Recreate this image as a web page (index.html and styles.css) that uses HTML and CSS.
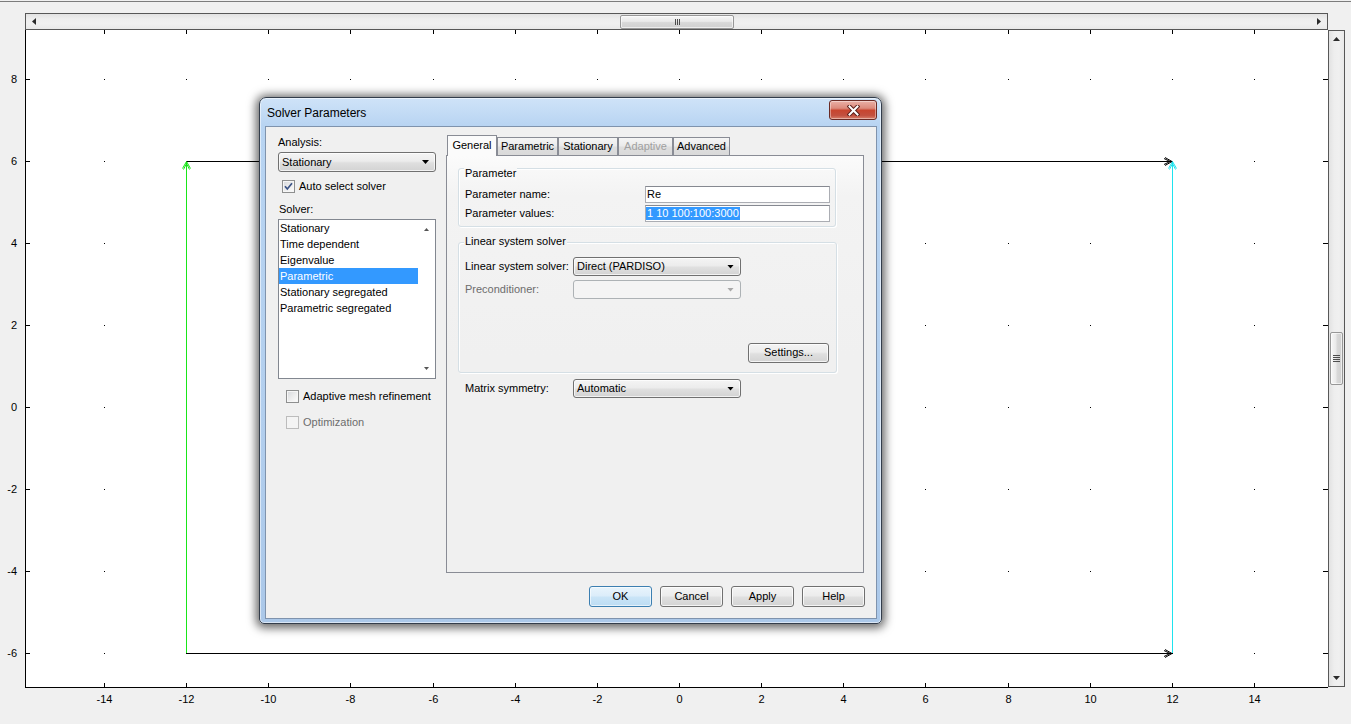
FILE: index.html
```html
<!DOCTYPE html>
<html lang="en">
<head>
<meta charset="utf-8">
<title>Solver Parameters</title>
<link rel="stylesheet" href="styles.css">
</head>
<body>
<div class="screen">
  <div class="hbar-row">
    <div class="hscroll">
      <div class="sb-btn"><i class="tri tri-left"></i></div>
      <div class="htrack"><div class="hthumb"><span class="grip-v"><i></i><i></i><i></i></span></div></div>
      <div class="sb-btn"><i class="tri tri-right"></i></div>
    </div>
  </div>
  <div class="main-row">
    <svg class="plot" width="1328" height="694" viewBox="0 0 1328 694" xmlns="http://www.w3.org/2000/svg">
      <defs>
        <g id="dotrow" fill="#000">
          <rect x="104" y="0" width="1" height="1"/><rect x="186" y="0" width="1" height="1"/><rect x="268" y="0" width="1" height="1"/>
          <rect x="350" y="0" width="1" height="1"/><rect x="433" y="0" width="1" height="1"/><rect x="515" y="0" width="1" height="1"/>
          <rect x="597" y="0" width="1" height="1"/><rect x="679" y="0" width="1" height="1"/><rect x="761" y="0" width="1" height="1"/>
          <rect x="843" y="0" width="1" height="1"/><rect x="925" y="0" width="1" height="1"/><rect x="1008" y="0" width="1" height="1"/>
          <rect x="1090" y="0" width="1" height="1"/><rect x="1172" y="0" width="1" height="1"/><rect x="1254" y="0" width="1" height="1"/>
        </g>
      </defs>
      <rect x="25" y="0" width="1303" height="657" fill="#fff"/>
      <use href="#dotrow" y="49"/><use href="#dotrow" y="131"/><use href="#dotrow" y="213"/><use href="#dotrow" y="295"/>
      <use href="#dotrow" y="377"/><use href="#dotrow" y="459"/><use href="#dotrow" y="541"/><use href="#dotrow" y="623"/>
      <path class="ticks" d="M104.5 0v4M186.5 0v4M268.5 0v4M350.5 0v4M433.5 0v4M515.5 0v4M597.5 0v4M679.5 0v4M761.5 0v4M843.5 0v4M925.5 0v4M1008.5 0v4M1090.5 0v4M1172.5 0v4M1254.5 0v4
        M104.5 653v4M186.5 653v4M268.5 653v4M350.5 653v4M433.5 653v4M515.5 653v4M597.5 653v4M679.5 653v4M761.5 653v4M843.5 653v4M925.5 653v4M1008.5 653v4M1090.5 653v4M1172.5 653v4M1254.5 653v4
        M26 49.5h4M26 131.5h4M26 213.5h4M26 295.5h4M26 377.5h4M26 459.5h4M26 541.5h4M26 623.5h4
        M1323 49.5h5M1323 131.5h5M1323 213.5h5M1323 295.5h5M1323 377.5h5M1323 459.5h5M1323 541.5h5M1323 623.5h5"/>
      <path class="axis" d="M25.5 0V658M25 657.5H1328"/>
      <path class="edge-green" d="M186.5 623V132"/>
      <path class="edge-cyan" d="M1172.5 623V132"/>
      <path class="edge-black" d="M186 131.5H1172M186 623.5H1172"/>
      <path class="head-green" d="M182.5 138.5L186.5 131.5L190.5 138.5M183.5 139.5L186.5 133.5L189.5 139.5"/>
      <path class="head-cyan" d="M1168.5 138.5L1172.5 131.5L1176.5 138.5M1169.5 139.5L1172.5 133.5L1175.5 139.5"/>
      <path class="head-black" d="M1165 127.5L1172 131.5L1165 135.5M1164 128.5L1170 131.5L1164 134.5M1165 619.5L1172 623.5L1165 627.5M1164 620.5L1170 623.5L1164 626.5"/>
      <g class="ylab">
        <text x="17" y="53">8</text><text x="17" y="135">6</text><text x="17" y="217">4</text><text x="17" y="299">2</text>
        <text x="17" y="381">0</text><text x="17" y="463">-2</text><text x="17" y="545">-4</text><text x="17" y="627">-6</text>
      </g>
      <g class="xlab">
        <text x="104.5" y="673">-14</text><text x="186.5" y="673">-12</text><text x="268.5" y="673">-10</text><text x="350.5" y="673">-8</text>
        <text x="433.5" y="673">-6</text><text x="515.5" y="673">-4</text><text x="597.5" y="673">-2</text><text x="679.5" y="673">0</text>
        <text x="761.5" y="673">2</text><text x="843.5" y="673">4</text><text x="925.5" y="673">6</text><text x="1008.5" y="673">8</text>
        <text x="1090.5" y="673">10</text><text x="1172.5" y="673">12</text><text x="1254.5" y="673">14</text>
      </g>
    </svg>
    <div class="vscroll">
      <div class="sb-btn v"><i class="tri tri-up"></i></div>
      <div class="vtrack"><div class="vthumb"><span class="grip-h"><i></i><i></i><i></i><i></i></span></div></div>
      <div class="sb-btn v"><i class="tri tri-down"></i></div>
    </div>
  </div>
</div>

<div class="dialog">
  <div class="titlebar">
    <span class="title">Solver Parameters</span>
    <div class="close-btn">
      <svg width="13" height="11" viewBox="0 0 13 11" xmlns="http://www.w3.org/2000/svg">
        <path d="M2.5 1.5L10.5 9.5M10.5 1.5L2.5 9.5" stroke="#5a1f1a" stroke-width="4" stroke-linecap="square" fill="none"/>
        <path d="M2.5 1.5L10.5 9.5M10.5 1.5L2.5 9.5" stroke="#fff" stroke-width="2" stroke-linecap="square" fill="none"/>
      </svg>
    </div>
  </div>
  <div class="client">
    <div class="body">
      <div class="leftpane">
        <div class="lbl lbl-analysis">Analysis:</div>
        <div class="combo combo-analysis"><span class="ct">Stationary</span><i class="dd"></i></div>
        <div class="chk-row row-auto">
          <span class="chk"><svg width="11" height="11" viewBox="0 0 11 11" xmlns="http://www.w3.org/2000/svg"><path d="M2 5.2L4.3 8L9 2.2" stroke="#3b5386" stroke-width="1.7" fill="none"/></svg></span>
          <span>Auto select solver</span>
        </div>
        <div class="lbl lbl-solver">Solver:</div>
        <div class="listbox">
          <ul class="items">
            <li>Stationary</li>
            <li>Time dependent</li>
            <li>Eigenvalue</li>
            <li class="sel">Parametric</li>
            <li>Stationary segregated</li>
            <li>Parametric segregated</li>
          </ul>
          <div class="lb-scroll"><i class="tri tri-up sm"></i><i class="tri tri-down sm"></i></div>
        </div>
        <div class="chk-row row-adapt"><span class="chk"></span><span>Adaptive mesh refinement</span></div>
        <div class="chk-row row-opt disabled"><span class="chk"></span><span>Optimization</span></div>
      </div>
      <div class="tabctl">
        <div class="tabs">
          <div class="tab active t-general">General</div>
          <div class="tab t-param">Parametric</div>
          <div class="tab t-stat">Stationary</div>
          <div class="tab t-adapt disabled">Adaptive</div>
          <div class="tab t-adv">Advanced</div>
        </div>
        <div class="pane">
          <div class="group g-param">
            <div class="gtitle">Parameter</div>
            <div class="frow r1"><span class="flabel">Parameter name:</span><div class="edit"><span class="etext">Re</span></div></div>
            <div class="frow r2"><span class="flabel">Parameter values:</span><div class="edit"><span class="etext selected">1 10 100:100:3000</span></div></div>
          </div>
          <div class="group g-linear">
            <div class="gtitle">Linear system solver</div>
            <div class="frow c1"><span class="flabel w108">Linear system solver:</span><div class="combo combo-mid"><span class="ct">Direct (PARDISO)</span><i class="dd"></i></div></div>
            <div class="frow c2 disabled"><span class="flabel w108">Preconditioner:</span><div class="combo combo-mid disabled"><span class="ct"></span><i class="dd"></i></div></div>
            <div class="frow settings-row"><button class="btn btn-settings">Settings...</button></div>
          </div>
          <div class="frow matrix-row"><span class="flabel w108">Matrix symmetry:</span><div class="combo combo-mid"><span class="ct">Automatic</span><i class="dd"></i></div></div>
        </div>
      </div>
    </div>
    <div class="buttons">
      <button class="btn default">OK</button>
      <button class="btn">Cancel</button>
      <button class="btn">Apply</button>
      <button class="btn">Help</button>
    </div>
  </div>
</div>
</body>
</html>
```

FILE: styles.css
```css
* { box-sizing: border-box; }

html, body {
  margin: 0;
  padding: 0;
}

body {
  width: 1351px;
  height: 724px;
  overflow: hidden;
  background: #f0f0f0;
  font-family: "Liberation Sans", Arial, sans-serif;
  position: relative;
}

.screen {
  margin-top: 1px;
  border-top: 1px solid #7c7c7c;
}

/* ---------- horizontal scrollbar ---------- */
.hbar-row {
  height: 28px;
  padding: 11px 0 0 25px;
}

.hscroll {
  width: 1303px;
  height: 17px;
  border: 1px solid #575757;
  display: flex;
  background: linear-gradient(#e2e2e2, #eeeeee 35%, #f0f0f0 65%, #e9e9e9);
}

.sb-btn {
  width: 16px;
  flex: none;
  display: flex;
  align-items: center;
  justify-content: center;
}

.sb-btn.v {
  width: auto;
  height: 16px;
}

.htrack {
  flex: 1;
  display: flex;
  align-items: center;
}

.hthumb {
  margin-left: 578px;
  width: 114px;
  height: 14px;
  border: 1px solid #979797;
  border-radius: 2px;
  background: linear-gradient(#f7f7f7, #e9e9e9 45%, #d8d8d8 55%, #d0d0d0);
  box-shadow: inset 0 0 0 1px rgba(255,255,255,.6);
  display: flex;
  align-items: center;
  justify-content: center;
}

.grip-v {
  display: flex;
  gap: 1px;
}

.grip-v i {
  display: block;
  width: 1px;
  height: 6px;
  background: #4d4d4d;
}

/* ---------- triangles ---------- */
.tri {
  display: block;
  background: #2b2b2b;
}

.tri-left  { width: 4px; height: 7px; clip-path: polygon(100% 0, 100% 100%, 0 50%); }
.tri-right { width: 4px; height: 7px; clip-path: polygon(0 0, 0 100%, 100% 50%); }
.tri-up    { width: 7px; height: 4px; clip-path: polygon(0 100%, 100% 100%, 50% 0); }
.tri-down  { width: 7px; height: 4px; clip-path: polygon(0 0, 100% 0, 50% 100%); }

.tri.sm {
  width: 5px;
  height: 3px;
  background: #555555;
}

/* ---------- plot ---------- */
.main-row {
  display: flex;
  height: 694px;
}

.plot {
  display: block;
  flex: none;
}

.plot .ticks,
.plot .axis {
  stroke: #000;
  stroke-width: 1;
  fill: none;
}

.plot .edge-green,
.plot .head-green {
  stroke: #19e619;
  fill: none;
}

.plot .edge-cyan,
.plot .head-cyan {
  stroke: #1ee3ee;
  fill: none;
}

.plot .edge-black,
.plot .head-black {
  stroke: #000;
  fill: none;
}

.plot text {
  font-family: "Liberation Sans", Arial, sans-serif;
  font-size: 11px;
  fill: #000;
}

.plot .ylab text { text-anchor: end; }
.plot .xlab text { text-anchor: middle; }

/* ---------- vertical scrollbar ---------- */
.vscroll {
  width: 17px;
  height: 657px;
  flex: none;
  border: 1px solid #575757;
  display: flex;
  flex-direction: column;
  background: linear-gradient(to right, #e2e2e2, #eeeeee 35%, #f0f0f0 65%, #e9e9e9);
}

.vtrack {
  flex: 1;
  display: flex;
  flex-direction: column;
  align-items: center;
}

.vthumb {
  margin-top: 285px;
  width: 13px;
  height: 53px;
  border: 1px solid #979797;
  border-radius: 2px;
  background: linear-gradient(to right, #f7f7f7, #e9e9e9 45%, #d8d8d8 55%, #d0d0d0);
  box-shadow: inset 0 0 0 1px rgba(255,255,255,.6);
  display: flex;
  align-items: center;
  justify-content: center;
}

.grip-h {
  display: flex;
  flex-direction: column;
  gap: 1px;
}

.grip-h i {
  display: block;
  width: 7px;
  height: 1px;
  background: #4d4d4d;
}

/* ---------- dialog ---------- */
.dialog {
  position: absolute;
  left: 259px;
  top: 97px;
  width: 623px;
  height: 527px;
  border: 1px solid #333d4b;
  border-radius: 7px 7px 5px 5px;
  background: linear-gradient(180deg, #cfe3f8 0px, #b8d4f2 28px, #b3cfee 60%, #abc8e9 100%);
  box-shadow: 0 1px 10px 3px rgba(0,0,0,.6), inset 0 0 0 1px rgba(255,255,255,.55);
  display: flex;
  flex-direction: column;
  font-family: "Liberation Sans", Arial, sans-serif;
  font-size: 11px;
  color: #000;
}

.titlebar {
  height: 28px;
  flex: none;
  display: flex;
  align-items: flex-start;
  padding-left: 7px;
}

.title {
  margin-top: 8px;
  font-size: 12px;
  line-height: 14px;
  color: #000;
}

.close-btn {
  margin-left: auto;
  margin-right: 4px;
  margin-top: 2px;
  width: 48px;
  height: 20px;
  border: 1px solid #6a2a24;
  border-radius: 3px;
  background: linear-gradient(#eab0a6 0%, #dc8a7c 40%, #c8452f 52%, #c2503f 80%, #d9806c 100%);
  box-shadow: inset 0 0 0 1px rgba(255,255,255,.4);
  display: flex;
  align-items: center;
  justify-content: center;
}

.client {
  flex: 1;
  margin: 0 4px 4px 5px;
  border: 1px solid #7f93ad;
  background: #f0f0f0;
  padding: 8px 12px 11px 12px;
  display: flex;
  flex-direction: column;
}

.body {
  display: flex;
  gap: 10px;
  height: 438px;
  flex: none;
}

/* left pane */
.leftpane {
  width: 158px;
  flex: none;
  display: flex;
  flex-direction: column;
}

.lbl {
  height: 13px;
  line-height: 13px;
  white-space: nowrap;
}

.lbl-analysis { margin-top: 1px; }
.lbl-solver { margin-top: 10px; padding-left: 1px; }

.combo {
  display: flex;
  align-items: center;
  border: 1px solid #707070;
  border-radius: 3px;
  background: linear-gradient(#f4f4f4 0%, #ececec 45%, #dfdfdf 55%, #d3d3d3 100%);
  box-shadow: inset 0 0 0 1px rgba(255,255,255,.7);
  padding-left: 3px;
  white-space: nowrap;
}

.combo .ct {
  flex: 1;
  line-height: 13px;
}

.combo .dd {
  display: block;
  width: 7px;
  height: 4px;
  margin-right: 6px;
  background: #000;
  clip-path: polygon(0 0, 100% 0, 50% 100%);
}

.combo.disabled {
  border-color: #adb2b5;
  background: #f4f4f4;
  box-shadow: none;
}

.combo.disabled .dd {
  background: #a8a8a8;
}

.combo-analysis {
  margin-top: 3px;
  height: 20px;
}

.combo-mid {
  width: 168px;
  height: 19px;
  flex: none;
}

.chk-row {
  display: flex;
  align-items: center;
  gap: 4px;
  height: 13px;
  line-height: 13px;
  white-space: nowrap;
}

.chk {
  display: block;
  flex: none;
  width: 13px;
  height: 13px;
  border: 1px solid #8e8f8f;
  background: linear-gradient(135deg, #d6d8dc 0%, #eeeeee 55%, #fdfdfd 100%);
  box-shadow: inset 0 0 0 1px #f6f6f6;
}

.chk svg { display: block; }

.chk-row.disabled { color: #6d6d6d; }
.chk-row.disabled .chk {
  border-color: #bcbcbc;
  background: #f4f4f4;
  box-shadow: none;
}

.row-auto { margin-top: 8px; padding-left: 4px; }
.row-adapt { margin-top: 11px; padding-left: 8px; }
.row-opt { margin-top: 13px; padding-left: 8px; }

.listbox {
  margin-top: 3px;
  height: 160px;
  border: 1px solid #828790;
  background: #fff;
  display: flex;
}

.items {
  list-style: none;
  margin: 0;
  padding: 0;
  width: 139px;
  flex: none;
}

.items li {
  height: 16px;
  line-height: 16px;
  padding-left: 1px;
  white-space: nowrap;
}

.items li.sel {
  background: #3399ff;
  color: #fff;
}

.lb-scroll {
  flex: 1;
  display: flex;
  flex-direction: column;
  align-items: center;
  justify-content: space-between;
  padding: 8px 0 8px;
}

/* tabs */
.tabctl {
  width: 418px;
  flex: none;
  display: flex;
  flex-direction: column;
}

.tabs {
  height: 20px;
  flex: none;
  display: flex;
  align-items: flex-end;
  padding-left: 1px;
}

.tab {
  height: 18px;
  border: 1px solid #898c95;
  border-bottom: none;
  background: linear-gradient(#f5f5f5, #ebebeb 45%, #dedede 55%, #d9d9d9);
  text-align: center;
  line-height: 17px;
  white-space: nowrap;
  flex: none;
}

.tab.active {
  height: 21px;
  margin-bottom: -1px;
  background: #fbfbfb;
  line-height: 18px;
  position: relative;
  z-index: 1;
}

.tab.disabled { color: #a0a0a0; }

.t-general { width: 50px; }
.t-param { width: 61px; }
.t-stat { width: 60px; }
.t-adapt { width: 55px; }
.t-adv { width: 57px; }

.pane {
  height: 418px;
  flex: none;
  border: 1px solid #898c95;
  background: linear-gradient(#fbfbfb, #f3f3f3 40px, #f0f0f0 200px);
  padding: 12px 0 0 11px;
  display: flex;
  flex-direction: column;
}

.group {
  border: 1px solid #d5dfe5;
  border-radius: 3px;
  box-shadow: inset 1px 1px 0 #ffffff, 1px 1px 0 #ffffff;
  padding: 0 6px;
  display: flex;
  flex-direction: column;
  flex: none;
}

.gtitle {
  align-self: flex-start;
  height: 13px;
  line-height: 13px;
  padding: 0 1px;
  margin-left: -1px;
  background: #f7f7f7;
  white-space: nowrap;
}

.g-param {
  width: 378px;
  height: 59px;
  padding-right: 5px;
}

.g-param .gtitle { margin-top: -2px; background: #f8f8f8; }

.g-linear {
  width: 379px;
  height: 131px;
  margin-top: 15px;
}

.g-linear .gtitle { margin-top: -8px; background: #f2f2f2; }

.frow {
  display: flex;
  align-items: center;
  white-space: nowrap;
}

.flabel { line-height: 13px; }
.w108 { width: 108px; flex: none; }

.frow.disabled .flabel { color: #6d6d6d; }

.r1 { margin-top: 6px; height: 17px; }
.r2 { margin-top: 2px; height: 17px; }

.edit {
  margin-left: auto;
  width: 185px;
  height: 17px;
  border: 1px solid #abadb3;
  border-top-color: #868991;
  background: #fff;
  display: flex;
  align-items: center;
}

.etext {
  line-height: 13px;
  padding: 0 1px;
  white-space: pre;
}

.etext.selected {
  background: #3399ff;
  color: #fff;
}

.c1 { margin-top: 9px; height: 19px; }
.c2 { margin-top: 4px; height: 19px; }

.settings-row {
  margin-top: 44px;
  height: 20px;
  justify-content: flex-end;
}

.matrix-row {
  margin-top: 6px;
  height: 19px;
  padding-left: 7px;
}

/* buttons */
.btn {
  width: 63px;
  height: 21px;
  padding: 0 0 1px;
  font-family: inherit;
  font-size: 11px;
  line-height: 13px;
  color: #000;
  border: 1px solid #707070;
  border-radius: 3px;
  background: linear-gradient(#f4f4f4 0%, #ececec 45%, #dfdfdf 55%, #d3d3d3 100%);
  box-shadow: inset 0 0 0 1px rgba(255,255,255,.75);
  flex: none;
}

.btn.default {
  border-color: #3c7fb1;
  background: linear-gradient(#e8f4fc 0%, #dcedfa 45%, #c9e4f7 55%, #bcdcf3 100%);
  box-shadow: inset 0 0 0 1px rgba(255,255,255,.6);
}

.btn-settings {
  width: 81px;
  height: 20px;
  margin-right: 1px;
}

.buttons {
  margin-top: 13px;
  margin-right: -1px;
  height: 21px;
  flex: none;
  display: flex;
  justify-content: flex-end;
  gap: 8px;
}
```
